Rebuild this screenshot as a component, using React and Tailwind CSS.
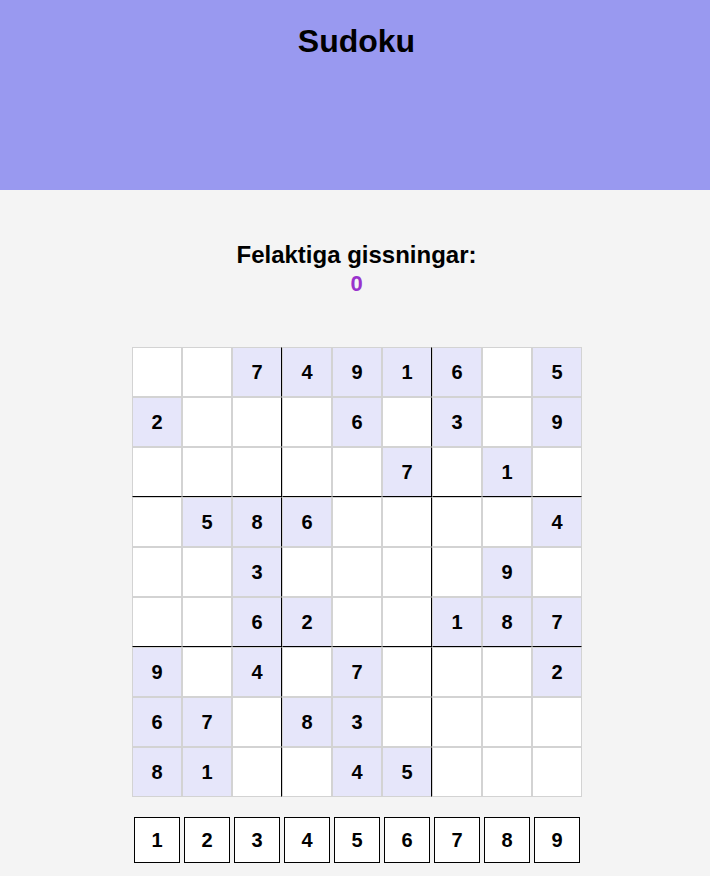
import React, { useState } from "react";

// Startläge för brädet, 0 = tom ruta
const START = [
  [0, 0, 7, 4, 9, 1, 6, 0, 5],
  [2, 0, 0, 0, 6, 0, 3, 0, 9],
  [0, 0, 0, 0, 0, 7, 0, 1, 0],
  [0, 5, 8, 6, 0, 0, 0, 0, 4],
  [0, 0, 3, 0, 0, 0, 0, 9, 0],
  [0, 0, 6, 2, 0, 0, 1, 8, 7],
  [9, 0, 4, 0, 7, 0, 0, 0, 2],
  [6, 7, 0, 8, 3, 0, 0, 0, 0],
  [8, 1, 0, 0, 4, 5, 0, 0, 0],
];

const Cell = ({ value, row, col, selected, onSelect }) => {
  const given = START[row][col] !== 0;
  const right = col === 2 || col === 5 ? "border-r-black" : "";
  const bottom = row === 2 || row === 5 ? "border-b-black" : "";
  return (
    <div
      onClick={() => onSelect([row, col])}
      className={`w-[50px] h-[50px] flex items-center justify-center border border-[#d3d3d3] text-[20px] font-bold text-black cursor-pointer ${right} ${bottom} ${
        given ? "bg-[#e6e6fa]" : selected ? "bg-[#f0f0ff]" : "bg-white"
      }`}
    >
      {value !== 0 ? value : ""}
    </div>
  );
};

export default function App() {
  const [board, setBoard] = useState(START.map((r) => [...r]));
  const [selected, setSelected] = useState(null);
  const [wrong, setWrong] = useState(0);

  const placeNumber = (n) => {
    if (!selected) return;
    const [r, c] = selected;
    if (START[r][c] !== 0) return;
    const next = board.map((row) => [...row]);
    next[r][c] = n;
    setBoard(next);
  };

  return (
    <div className="min-h-screen bg-[#f4f4f4] font-['Liberation_Sans',Arial,sans-serif] text-black">
      <header className="h-[190px] bg-[#9999f0] pt-[23px] pl-[3px] text-center">
        <h1 className="text-[32px] leading-[37px] font-bold">Sudoku</h1>
      </header>

      <div className="pt-[51px] pl-[3px] text-center">
        <h2 className="text-[24px] leading-[28px] font-bold">
          Felaktiga gissningar:
          <br />
          <span className="text-[22px] text-[#9932cc]">{wrong}</span>
        </h2>
      </div>

      <div className="mt-[49px] flex justify-center pl-[4px]">
        <div className="grid grid-cols-9 w-[450px]">
          {board.map((row, r) =>
            row.map((v, c) => (
              <Cell
                key={`${r}-${c}`}
                value={v}
                row={r}
                col={c}
                selected={selected && selected[0] === r && selected[1] === c}
                onSelect={setSelected}
              />
            ))
          )}
        </div>
      </div>

      <div className="mt-[20px] flex justify-center gap-[4px] pl-[4px]">
        {[1, 2, 3, 4, 5, 6, 7, 8, 9].map((n) => (
          <button
            key={n}
            onClick={() => placeNumber(n)}
            className="w-[46px] h-[46px] bg-white border border-black text-[20px] font-bold flex items-center justify-center"
          >
            {n}
          </button>
        ))}
      </div>
    </div>
  );
}
